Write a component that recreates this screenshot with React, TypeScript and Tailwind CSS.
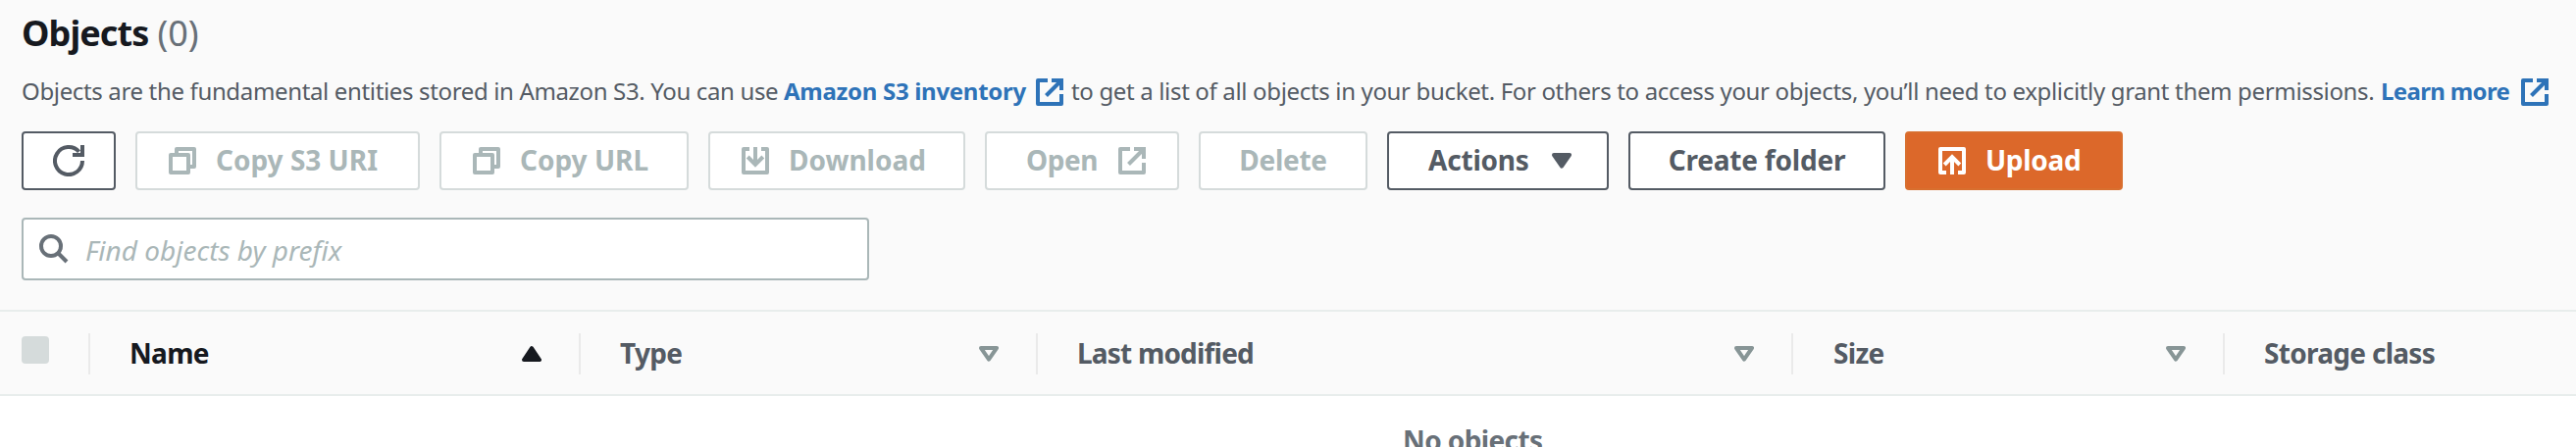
import type { ReactNode } from "react";

function ExternalIcon() {
  return (
    <svg width="28" height="28" viewBox="0 0 28 28" fill="none" stroke="currentColor" strokeWidth="4" className="shrink-0">
      <path d="M12 2H2V26H26V16" strokeLinejoin="round" />
      <path d="M16 2H26V12" />
      <path d="M25 3L10.5 17.5" />
    </svg>
  );
}

function CopyIcon() {
  return (
    <svg width="28" height="28" viewBox="0 0 28 28" fill="none" stroke="currentColor" strokeWidth="4" strokeLinejoin="round" className="shrink-0">
      <path d="M2 8H20V26H2Z" />
      <path d="M8 6V2H26V20H22" />
    </svg>
  );
}

function DownloadIcon() {
  return (
    <svg width="28" height="28" viewBox="0 0 28 28" fill="none" stroke="currentColor" strokeWidth="4" className="shrink-0">
      <path d="M8 2H2V26H26V2H20" strokeLinejoin="round" />
      <path d="M14 0V17M6.2 10L14 17.8L21.8 10" />
    </svg>
  );
}

function UploadIcon() {
  return (
    <svg width="28" height="28" viewBox="0 0 28 28" fill="none" stroke="currentColor" strokeWidth="4" className="shrink-0">
      <path d="M8 26H2V2H26V26H20" strokeLinejoin="round" />
      <path d="M14 28V11M6.2 18L14 10.2L21.8 18" />
    </svg>
  );
}

function RefreshIcon() {
  return (
    <svg width="32" height="32" viewBox="0 0 32 32" fill="none" stroke="currentColor" strokeWidth="4">
      <path d="M30 16A14 14 0 1 1 26.5 6.8" />
      <path d="M30 0V10H20" />
    </svg>
  );
}

function SearchIcon() {
  return (
    <svg width="30" height="30" viewBox="0 0 30 30" fill="none" stroke="currentColor" strokeWidth="4" className="shrink-0">
      <circle cx="12" cy="12" r="10" />
      <path d="M19 19L28 28" />
    </svg>
  );
}

function Triangle({ kind }: { kind: "asc" | "desc" | "filled" }) {
  return (
    <svg width="20" height="16" viewBox="0 0 20 16" fill={kind === "desc" ? "none" : "currentColor"} stroke="currentColor" strokeWidth="4" strokeLinejoin="round" className="shrink-0">
      <path d={kind === "asc" ? "M10 2.2L18 14H2Z" : "M10 13.6L18 2H2Z"} />
    </svg>
  );
}

function Button({ className, children }: { className: string; children: ReactNode }) {
  return (
    <button className={`flex h-[60px] shrink-0 items-center rounded-[4px] border-2 text-[28px] leading-[40px] font-bold whitespace-nowrap ${className}`}>
      {children}
    </button>
  );
}

const disabled = "border-[#d5dbdb] bg-white text-[#aab7b8]";
const normal = "border-[#545b64] bg-white text-[#545b64]";

function Column({ label, sort, className, labelClass }: { label: string; sort?: "asc" | "desc"; className: string; labelClass: string }) {
  return (
    <div className={`flex h-[42px] shrink-0 items-center justify-between border-l-2 border-[#eaeaea] pr-[38px] ${className}`}>
      <span className={`pb-[2px] ${labelClass}`}>{label}</span>
      {sort && <span className={sort === "desc" ? "text-[#879596]" : ""}><Triangle kind={sort} /></span>}
    </div>
  );
}

export default function App() {
  return (
    <div className="h-[456px] w-[2626px] overflow-hidden bg-white font-['Noto_Sans',sans-serif] text-[#545b64]">
      <header className="h-[316px] bg-[#fafafa] pt-[14px] pl-[22px]">
        <h2 className="flex gap-[9px] text-[36px] leading-[40px] text-[#16191f]">
          <span className="font-bold tracking-[-0.9px]">Objects</span>
          <span className="text-[#687078]">(0)</span>
        </h2>
        <p className="mt-[21px] flex h-9 text-[24px] leading-[36px] whitespace-nowrap">
          <span className="w-[777px] shrink-0 tracking-[-0.35px]">
            Objects are the fundamental entities stored in Amazon S3. You can use
          </span>
          <a className="flex w-[293px] shrink-0 text-[#2e73b8]">
            <span className="w-[257px] font-bold tracking-[-0.3px]">Amazon S3 inventory</span>
            <span className="mt-[5px]"><ExternalIcon /></span>
          </a>
          <span className="w-[1335px] shrink-0 tracking-[-0.34px]">
            to get a list of all objects in your bucket. For others to access your objects, you’ll need to explicitly grant them permissions.
          </span>
          <a className="flex shrink-0 text-[#2e73b8]">
            <span className="w-[143px] font-bold tracking-[-0.65px]">Learn more</span>
            <span className="mt-[5px]"><ExternalIcon /></span>
          </a>
        </p>
        <div className="mt-[23px] flex gap-5">
          <Button className={`w-24 justify-center ${normal}`}><RefreshIcon /></Button>
          <Button className={`w-[290px] gap-5 pl-8 ${disabled}`}>
            <CopyIcon /><span className="pb-[2px]">Copy S3 URI</span>
          </Button>
          <Button className={`w-[254px] gap-5 pl-8 ${disabled}`}>
            <CopyIcon /><span className="pb-[2px]">Copy URL</span>
          </Button>
          <Button className={`w-[262px] gap-5 pl-8 ${disabled}`}>
            <DownloadIcon /><span className="pb-[2px]">Download</span>
          </Button>
          <Button className={`w-[198px] justify-between pr-8 pl-10 ${disabled}`}>
            <span className="pb-[2px] tracking-[-0.4px]">Open</span><ExternalIcon />
          </Button>
          <Button className={`w-[172px] justify-center ${disabled}`}>
            <span className="pb-[2px] tracking-[-0.3px]">Delete</span>
          </Button>
          <Button className={`w-[226px] justify-between pr-9 pl-10 ${normal}`}>
            <span className="pb-[2px] tracking-[-0.2px]">Actions</span><Triangle kind="filled" />
          </Button>
          <Button className={`w-[262px] justify-center ${normal}`}>
            <span className="pb-[2px] tracking-[-0.2px]">Create folder</span>
          </Button>
          <Button className="w-[222px] gap-5 border-[#d86f2f] bg-[#dc682a] pl-8 text-white">
            <UploadIcon /><span className="pb-[2px] tracking-[-0.3px]">Upload</span>
          </Button>
        </div>
        <div className="mt-7 flex h-16 w-[864px] items-center rounded-[4px] border-2 border-[#aab7b8] bg-white pl-4 text-[28px] leading-[40px]">
          <span className="text-[#687078]"><SearchIcon /></span>
          <span className="pt-[2px] pl-[17px] text-[#aab7b8] italic">Find objects by prefix</span>
        </div>
      </header>
      <div className="flex h-[88px] items-center border-y-2 border-[#e8edec] bg-[#fafafa] pt-[2px] text-[28px] leading-[40px] font-bold whitespace-nowrap">
        <div className="w-[90px] shrink-0 pb-[8px] pl-[22px]">
          <div className="size-7 rounded-[4px] bg-[#d5dbdb]" />
        </div>
        <Column label="Name" sort="asc" className="w-[500px] pl-[40px] text-[#16191f]" labelClass="tracking-[-0.7px]" />
        <Column label="Type" sort="desc" className="w-[466px] pl-[40px]" labelClass="tracking-[-0.7px]" />
        <Column label="Last modified" sort="desc" className="w-[770px] pl-[40px]" labelClass="tracking-[-0.8px]" />
        <Column label="Size" sort="desc" className="w-[440px] pl-[41px]" labelClass="tracking-[-0.7px]" />
        <Column label="Storage class" className="w-[360px] pl-[40px]" labelClass="tracking-[-0.7px]" />
      </div>
      <div className="pt-[25px] pl-[1430px] text-[28px] leading-[40px] font-bold tracking-[-0.6px] text-[#687078]">No objects</div>
    </div>
  );
}
